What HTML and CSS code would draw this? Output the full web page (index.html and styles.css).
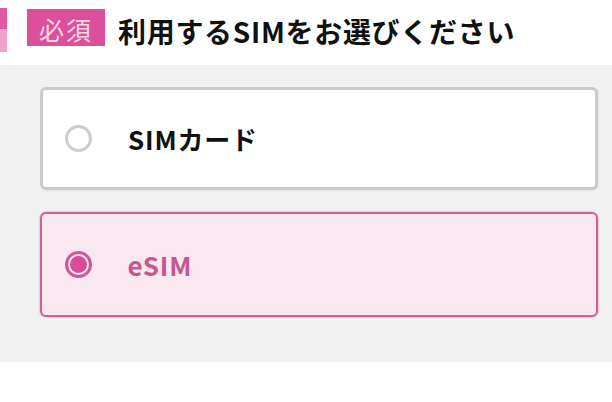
FILE: index.html
```html
<!DOCTYPE html>
<html lang="ja">
<head>
<meta charset="utf-8">
<link rel="stylesheet" href="styles.css">
</head>
<body>
<div class="page">
  <header class="heading">
    <span class="accent"><span class="accent-top"></span><span class="accent-bottom"></span></span>
    <span class="badge">必須</span>
    <h1 class="title">利用するSIMをお選びください</h1>
  </header>
  <section class="options">
    <label class="option">
      <span class="radio"></span>
      <span class="label">SIMカード</span>
    </label>
    <label class="option selected">
      <span class="radio"><span class="dot"></span></span>
      <span class="label">eSIM</span>
    </label>
  </section>
</div>
</body>
</html>
```
FILE: styles.css
```css
html, body {
  margin: 0;
  padding: 0;
  background: #ffffff;
}
body {
  font-family: "Noto Sans CJK JP", "Noto Sans", sans-serif;
  width: 612px;
  height: 402px;
  overflow: hidden;
}
.page {
  display: flex;
  flex-direction: column;
}
.heading {
  height: 65px;
  display: flex;
  align-items: flex-start;
  position: relative;
}
.accent {
  position: absolute;
  left: 0;
  top: 8px;
  width: 7px;
  height: 44px;
  display: flex;
  flex-direction: column;
}
.accent-top {
  height: 21px;
  background: #e05aa3;
}
.accent-bottom {
  flex: 1;
  background: #f0a2ca;
}
.badge {
  margin-left: 27px;
  margin-top: 9px;
  width: 78px;
  height: 37px;
  box-sizing: border-box;
  padding-top: 3px;
  background: #dc4f9a;
  color: #f7d6e8;
  font-size: 25px;
  font-weight: 400;
  line-height: 34px;
  text-align: center;
  letter-spacing: 2px;
}
.title {
  margin: 0 0 0 13px;
  margin-top: 13px;
  font-size: 28px;
  font-weight: 700;
  line-height: 37px;
  color: #111111;
  letter-spacing: 0.7px;
}
.options {
  background: #f1f1f1;
  height: 297px;
  box-sizing: border-box;
  padding: 22px 14px 0 40px;
  display: flex;
  flex-direction: column;
  gap: 22px;
}
.option {
  height: 103px;
  box-sizing: border-box;
  background: #ffffff;
  border: 3px solid #cbcbcb;
  border-radius: 6px;
  box-shadow: 1px 1px 1px rgba(0,0,0,0.06);
  display: flex;
  align-items: center;
  padding-left: 22px;
}
.option.selected {
  height: 105px;
  background: #fae8f1;
  border: 2.5px solid #c9639a;
  box-shadow: 0 0 1px 1px rgba(230,140,190,0.35);
  padding-left: 22.5px;
}
.radio {
  width: 27px;
  height: 27px;
  box-sizing: border-box;
  border: 3px solid #cdcdcd;
  border-radius: 50%;
  background: #ffffff;
  display: flex;
  align-items: center;
  justify-content: center;
  flex-shrink: 0;
}
.selected .radio {
  border-color: #d2559a;
  background: #fbe9f2;
}
.dot {
  width: 17px;
  height: 17px;
  border-radius: 50%;
  background: #d94c98;
}
.label {
  margin-left: 36px;
  font-size: 26px;
  font-weight: 700;
  color: #111111;
  letter-spacing: 0.8px;
}
.selected .label {
  color: #c7558f;
}
```
